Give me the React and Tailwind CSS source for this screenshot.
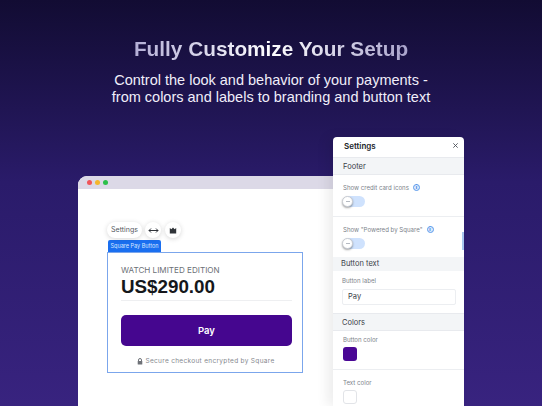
import React from 'react';

const sans = "font-['Liberation_Sans',Arial,sans-serif]";
const ui = "font-['Inter','Liberation_Sans',sans-serif]";

function Info() {
  return (
    <span className="ml-[4px] flex h-[7px] w-[7px] items-center justify-center rounded-full border border-[#5b9bec] bg-[#dbe9fc] text-[5px] font-bold leading-none text-[#2f78e0]">
      i
    </span>
  );
}

function Toggle() {
  return (
    <div className="relative mt-[4px] h-[11px] w-[22px] rounded-full bg-[#cfe2fd]">
      <div className="absolute -left-px top-0 flex h-[11px] w-[11px] items-center justify-center rounded-full border border-[#c9ccd2] bg-white shadow-[0_1px_2px_rgba(0,0,0,0.35)]">
        <div className="h-px w-[4px] bg-[#b5bac2]" />
      </div>
    </div>
  );
}

function SectionHead({ children, className }) {
  return (
    <div className={`flex h-[18px] shrink-0 items-center border-y border-[#e8eaee] bg-[#f3f5f7] pt-px text-[7.5px] text-[#3a4048] ${className}`}>
      {children}
    </div>
  );
}

function Settings() {
  return (
    <div className={`absolute left-[333px] top-[137px] flex h-[269px] w-[131px] flex-col overflow-hidden rounded-t-[4px] bg-white shadow-[-6px_0_12px_rgba(0,0,0,0.07)] ${ui}`}>
      <div className="flex h-[16px] shrink-0 items-center justify-between pl-[11px] pr-[4px] pt-px">
        <span className="text-[8px] font-semibold text-[#20242a]">Settings</span>
        <svg width="7" height="7" viewBox="0 0 8 8" className="mr-px">
          <path d="M1.5 1.5l5 5M6.5 1.5l-5 5" stroke="#4a4f57" strokeWidth="1" />
        </svg>
      </div>
      <SectionHead className="mt-[4px] pl-[10px]">Footer</SectionHead>
      <div className="h-[42px] shrink-0 border-b border-[#eceef1] pl-[10px] pt-[8px]">
        <div className="flex items-center text-[6.1px] leading-[9px] text-[#7d838b]">
          Show credit card icons <Info />
        </div>
        <Toggle />
      </div>
      <div className="relative h-[40px] shrink-0 pl-[10px] pt-[8px]">
        <div className="flex items-center text-[6.1px] leading-[9px] text-[#7d838b]">
          Show "Powered by Square" <Info />
        </div>
        <Toggle />
        <div className="absolute right-0 top-[15px] h-[18px] w-[2px] bg-[#a9c7ef]" />
      </div>
      <div className="flex h-[14px] shrink-0 items-center bg-[#f3f5f7] pl-[8px] text-[7.5px] text-[#3a4048]">Button text</div>
      <div className="h-[42px] shrink-0 pl-[9px] pt-[5px]">
        <div className="text-[6.1px] leading-[9px] text-[#7d838b]">Button label</div>
        <div className="mt-[4px] flex h-[16px] w-[114px] items-center rounded-[2px] border border-[#eceef1] pl-[5px] text-[7.5px] text-[#3a4048]">
          Pay
        </div>
      </div>
      <SectionHead className="pl-[9px]">Colors</SectionHead>
      <div className="h-[39px] shrink-0 border-b border-[#eceef1] pl-[10px] pt-[4px]">
        <div className="text-[6.1px] leading-[9px] text-[#7d838b]">Button color</div>
        <div className="mt-[3px] h-[14px] w-[14px] rounded-[3px] bg-[#4a0795]" />
      </div>
      <div className="pl-[10px] pt-[8px]">
        <div className="text-[6.1px] leading-[9px] text-[#7d838b]">Text color</div>
        <div className="mt-[3px] h-[14px] w-[14px] rounded-[3px] border border-[#e2e4e8] bg-white" />
      </div>
    </div>
  );
}

function Browser() {
  return (
    <div className={`absolute left-[78px] top-[176px] h-[230px] w-[300px] overflow-hidden rounded-t-[9px] bg-white ${ui}`}>
      <div className="flex h-[13px] items-center gap-[3px] bg-[#dcd9e7] pl-[9px]">
        <span className="h-[5px] w-[5px] rounded-full bg-[#f0555a]" />
        <span className="h-[5px] w-[5px] rounded-full bg-[#f4b62c]" />
        <span className="h-[5px] w-[5px] rounded-full bg-[#2cc04a]" />
      </div>
      <div className="ml-[29px] mt-[33px] flex items-center gap-[3px]">
        <div className="flex h-[16px] w-[35px] items-center justify-center rounded-full bg-white text-[7px] text-[#55595f] shadow-[0_1px_5px_rgba(0,0,0,0.16)]">
          Settings
        </div>
        <div className="flex h-[16px] w-[16px] items-center justify-center rounded-full bg-white shadow-[0_1px_5px_rgba(0,0,0,0.16)]">
          <svg width="11" height="7" viewBox="0 0 11 7" fill="none" stroke="#2f3338" strokeWidth="1">
            <path d="M1 3.5h9M3 1.5l-2 2 2 2M8 1.5l2 2-2 2" />
          </svg>
        </div>
        <div className="ml-[1px] flex h-[16px] w-[16px] items-center justify-center rounded-full bg-white shadow-[0_1px_5px_rgba(0,0,0,0.16)]">
          <svg width="8" height="7" viewBox="0 0 8 7" fill="#2f3338">
            <path d="M.8 1l1.6 1.2L4 .5l1.6 1.7L7.2 1v5.5H.8z" />
          </svg>
        </div>
      </div>
      <div className="ml-[30px] mt-[2px] flex h-[12px] w-[53px] items-center justify-center rounded-t-[2px] bg-[#1a6ff0] text-[5.5px] text-[#d9e8ff]">
        Square Pay Button
      </div>
      <div className="ml-[29px] h-[121px] w-[196px] border border-[#7ba6ec] px-[13px] pt-[12px]">
        <div className="text-[8.1px] leading-[10px] text-[#6c7076]">WATCH LIMITED EDITION</div>
        <div className={`mt-[2px] text-[18.8px] font-bold leading-[20px] text-[#15171b] ${sans}`}>US$290.00</div>
        <div className="mt-[3px] h-px w-[171px] bg-[#eeeff1]" />
        <div className="mt-[14px] flex h-[31px] w-[171px] items-center justify-center rounded-[5px] bg-[#45068f] pt-[2px] text-[9.5px] font-semibold text-white">
          Pay
        </div>
        <div className="mt-[11px] flex items-center justify-center pl-[2px] text-[6.5px] leading-[9px] tracking-[0.32px] text-[#85888e]">
          <svg width="6" height="7" viewBox="0 0 6 7" className="mr-[2px]">
            <path d="M1.5 3V2a1.5 1.5 0 013 0v1" fill="none" stroke="#6f7278" />
            <rect x="0.7" y="3" width="4.6" height="3.6" rx="0.5" fill="#6f7278" />
          </svg>
          Secure checkout encrypted by Square
        </div>
      </div>
    </div>
  );
}

export default function App() {
  return (
    <div className="relative h-[406px] w-[542px] overflow-hidden bg-gradient-to-b from-[#120c33] via-[#2a1b6a] via-45% to-[#38237f]">
      <div className={`flex flex-col items-center pt-[36px] ${sans}`}>
        <h1 className="bg-gradient-to-r from-[#b4afd6] via-white to-[#aaa4cc] bg-clip-text text-[20.8px] font-bold leading-[26px] text-transparent">
          Fully Customize Your Setup
        </h1>
        <p className="mt-[10px] text-center text-[14.5px] leading-[17px] text-[#f0eefa]">
          Control the look and behavior of your payments -
          <br />
          from colors and labels to branding and button text
        </p>
      </div>
      <Browser />
      <Settings />
    </div>
  );
}
